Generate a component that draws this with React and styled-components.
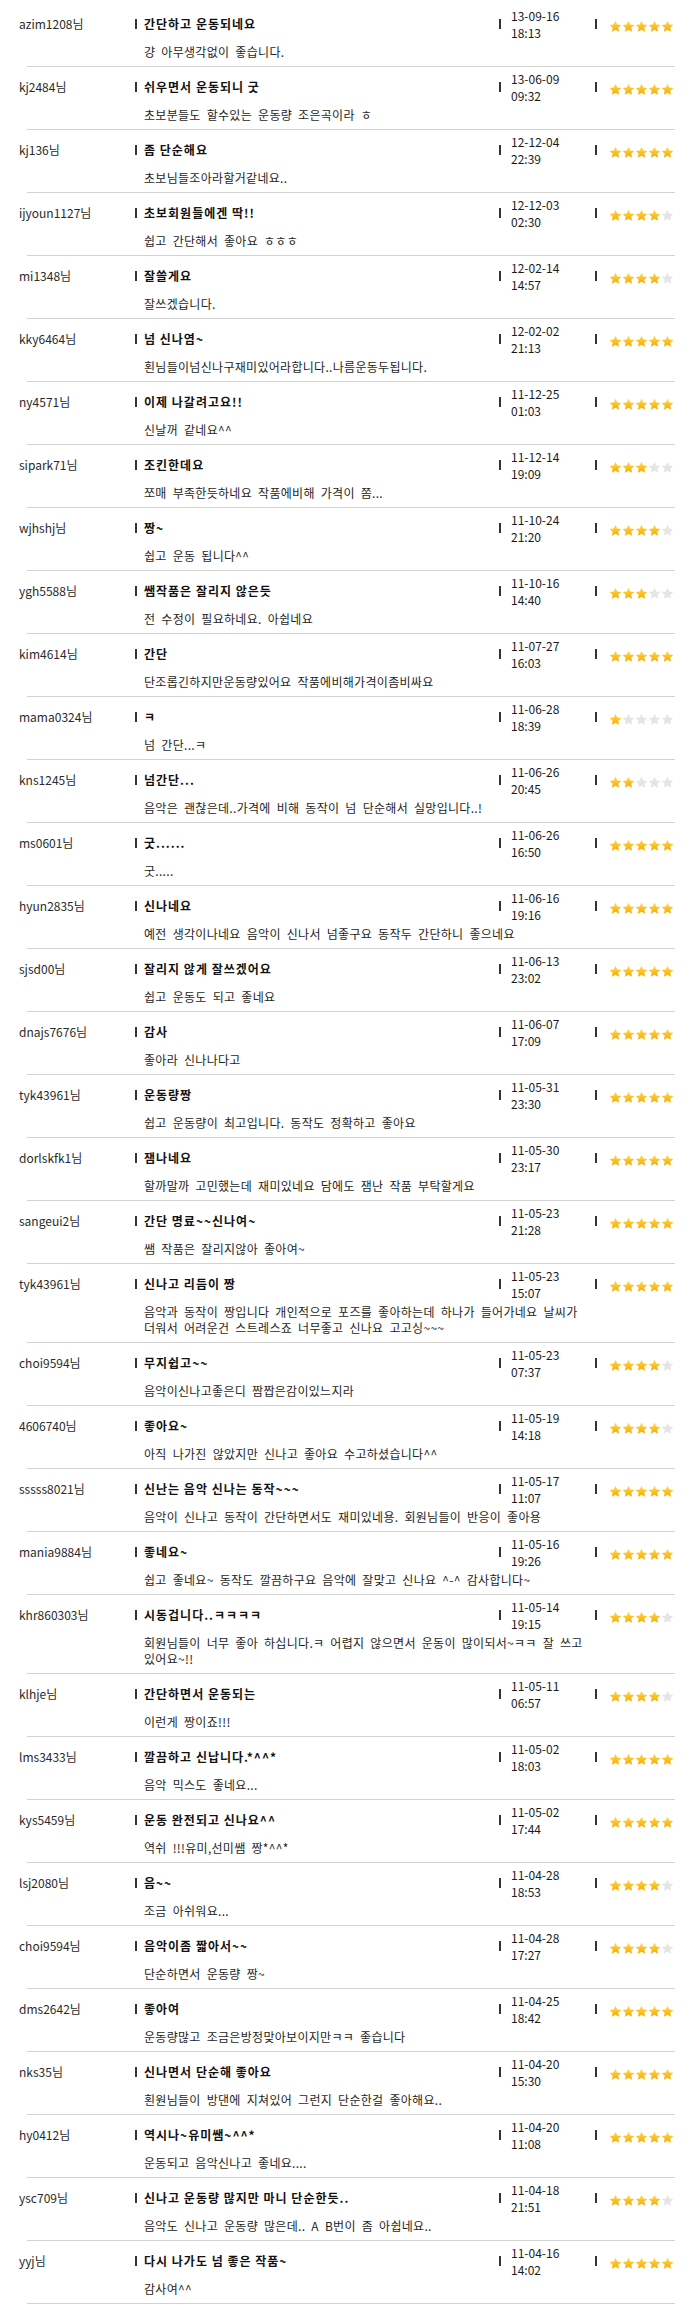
import React from "react";
import styled, { createGlobalStyle } from "styled-components";

const reviews = [
  ["azim1208님", "간단하고 운동되네요", "걍 아무생각없이 좋습니다.", "13-09-16", "18:13", 5],
  ["kj2484님", "쉬우면서 운동되니 굿", "초보분들도 할수있는 운동량 조은곡이라 ㅎ", "13-06-09", "09:32", 5],
  ["kj136님", "좀 단순해요", "초보님들조아라할거같네요..", "12-12-04", "22:39", 5],
  ["ijyoun1127님", "초보회원들에겐 딱!!", "쉽고 간단해서 좋아요 ㅎㅎㅎ", "12-12-03", "02:30", 4],
  ["mi1348님", "잘쓸게요", "잘쓰겠습니다.", "12-02-14", "14:57", 4],
  ["kky6464님", "넘 신나염~", "횐님들이넘신나구재미있어라합니다..나름운동두됩니다.", "12-02-02", "21:13", 5],
  ["ny4571님", "이제 나갈려고요!!", "신날꺼 같네요^^", "11-12-25", "01:03", 5],
  ["sipark71님", "조킨한데요", "쪼매 부족한듯하네요 작품에비해 가격이 쫌...", "11-12-14", "19:09", 3],
  ["wjhshj님", "짱~", "쉽고 운동 됩니다^^", "11-10-24", "21:20", 4],
  ["ygh5588님", "쌤작품은 잘리지 않은듯", "전 수정이 필요하네요. 아쉽네요", "11-10-16", "14:40", 3],
  ["kim4614님", "간단", "단조롭긴하지만운동량있어요 작품에비해가격이좀비싸요", "11-07-27", "16:03", 5],
  ["mama0324님", "ㅋ", "넘 간단...ㅋ", "11-06-28", "18:39", 1],
  ["kns1245님", "넘간단...", "음악은 괜찮은데..가격에 비해 동작이 넘 단순해서 실망입니다..!", "11-06-26", "20:45", 2],
  ["ms0601님", "굿......", "굿.....", "11-06-26", "16:50", 5],
  ["hyun2835님", "신나네요", "예전 생각이나네요 음악이 신나서 넘좋구요 동작두 간단하니 좋으네요", "11-06-16", "19:16", 5],
  ["sjsd00님", "잘리지 않게 잘쓰겠어요", "쉽고 운동도 되고 좋네요", "11-06-13", "23:02", 5],
  ["dnajs7676님", "감사", "좋아라 신나나다고", "11-06-07", "17:09", 5],
  ["tyk43961님", "운동량짱", "쉽고 운동량이 최고입니다. 동작도 정확하고 좋아요", "11-05-31", "23:30", 5],
  ["dorlskfk1님", "잼나네요", "할까말까 고민했는데 재미있네요 담에도 잼난 작품 부탁할게요", "11-05-30", "23:17", 5],
  ["sangeui2님", "간단 명료~~신나여~", "쌤 작품은 잘리지않아 좋아여~", "11-05-23", "21:28", 5],
  ["tyk43961님", "신나고 리듬이 짱", "음악과 동작이 짱입니다 개인적으로 포즈를 좋아하는데 하나가 들어가네요 날씨가 더워서 어려운건 스트레스죠 너무좋고 신나요 고고싱~~~", "11-05-23", "15:07", 5],
  ["choi9594님", "무지쉽고~~", "음악이신나고좋은디 짬짭은감이있느지라", "11-05-23", "07:37", 4],
  ["4606740님", "좋아요~", "아직 나가진 않았지만 신나고 좋아요 수고하셨습니다^^", "11-05-19", "14:18", 4],
  ["sssss8021님", "신난는 음악 신나는 동작~~~", "음악이 신나고 동작이 간단하면서도 재미있네용. 회원님들이 반응이 좋아용", "11-05-17", "11:07", 5],
  ["mania9884님", "좋네요~", "쉽고 좋네요~ 동작도 깔끔하구요 음악에 잘맞고 신나요 ^-^ 감사합니다~", "11-05-16", "19:26", 5],
  ["khr860303님", "시동겁니다..ㅋㅋㅋㅋ", "회원님들이 너무 좋아 하십니다.ㅋ 어렵지 않으면서 운동이 많이되서~ㅋㅋ 잘 쓰고 있어요~!!", "11-05-14", "19:15", 4],
  ["klhje님", "간단하면서 운동되는", "이런게 짱이죠!!!", "11-05-11", "06:57", 4],
  ["lms3433님", "깔끔하고 신납니다.*^^*", "음악 믹스도 좋네요...", "11-05-02", "18:03", 5],
  ["kys5459님", "운동 완전되고 신나요^^", "역쉬 !!!유미,선미쌤 짱*^^*", "11-05-02", "17:44", 5],
  ["lsj2080님", "음~~", "조금 아쉬워요...", "11-04-28", "18:53", 4],
  ["choi9594님", "음악이좀 짧아서~~", "단순하면서 운동량 짱~", "11-04-28", "17:27", 4],
  ["dms2642님", "좋아여", "운동량많고 조금은방정맞아보이지만ㅋㅋ 좋습니다", "11-04-25", "18:42", 5],
  ["nks35님", "신나면서 단순해 좋아요", "횐원님들이 방댄에 지쳐있어 그런지 단순한걸 좋아해요..", "11-04-20", "15:30", 5],
  ["hy0412님", "역시나~유미쌤~^^*", "운동되고 음악신나고 좋네요....", "11-04-20", "11:08", 5],
  ["ysc709님", "신나고 운동량 많지만 마니 단순한듯..", "음악도 신나고 운동량 많은데.. A B번이 좀 아쉽네요..", "11-04-18", "21:51", 4],
  ["yyj님", "다시 나가도 넘 좋은 작품~", "감사여^^", "11-04-16", "14:02", 5]
];

function Star({ on }) {
  return (
    <StarIcon viewBox="0 0 24 24">
      <defs>
        <linearGradient id="gold" x1="0" y1="0" x2="0" y2="1">
          <stop offset="0%" stopColor="#ffdc4a" />
          <stop offset="100%" stopColor="#f6a800" />
        </linearGradient>
      </defs>
      <polygon
        points="12,1.2 15.2,8.2 22.8,9 17.1,14.2 18.7,21.8 12,17.9 5.3,21.8 6.9,14.2 1.2,9 8.8,8.2"
        fill={on ? "url(#gold)" : "#e5e5e5"}
      />
    </StarIcon>
  );
}

function Review({ item }) {
  const [name, title, body, date, time, score] = item;
  return (
    <>
      <Row>
        <Head>
          <Name>{name}</Name>
          <Cell gap={7}>
            <Title>{title}</Title>
          </Cell>
          <Cell gap={10}>
            <When>
              <div>{date}</div>
              <div>{time}</div>
            </When>
          </Cell>
          <Cell gap={12}>
            <Stars>
              {[1, 2, 3, 4, 5].map(n => (
                <Star key={n} on={n <= score} />
              ))}
            </Stars>
          </Cell>
        </Head>
        <Body>{body}</Body>
      </Row>
      <Rule />
    </>
  );
}

function App() {
  return (
    <>
      <Global />
      <List>
        {reviews.map((r, i) => (
          <Review key={i} item={r} />
        ))}
      </List>
    </>
  );
}

const Global = createGlobalStyle`
  body {
    margin: 0;
    background: #fff;
    font-family: "Noto Sans CJK KR", "Noto Sans", sans-serif;
    font-size: 12px;
    color: #222;
  }
`;

const List = styled.div`
  width: 693px;
  padding-top: 4px;
`;

const Row = styled.div`
  padding: 0 0 6px 19px;
`;

const Head = styled.div`
  display: grid;
  grid-template-columns: 116px 364px 96px 80px;
  height: 40px;
  align-items: center;
`;

const Name = styled.div`
  color: #2a2a2a;
  line-height: 16px;
  white-space: nowrap;
`;

const Cell = styled.div`
  display: flex;
  align-items: center;
  height: 100%;

  &::before {
    content: "";
    flex: none;
    width: 2px;
    height: 10px;
    background: #333;
    margin-right: ${p => p.gap}px;
    margin-top: -1px;
  }
`;

const Title = styled.div`
  font-weight: bold;
  color: #111;
  letter-spacing: 1px;
  line-height: 16px;
  white-space: nowrap;
`;

const When = styled.div`
  color: #1a1a1a;
  line-height: 17px;
`;

const Stars = styled.div`
  display: flex;
  margin-top: 5px;
`;

const StarIcon = styled.svg`
  width: 13px;
  height: 13px;
  display: block;
`;

const Body = styled.div`
  margin-left: 125px;
  width: 450px;
  line-height: 16px;
  letter-spacing: 0.3px;
  word-spacing: 3px;
  word-break: keep-all;
  color: #1e1e1e;
`;

const Rule = styled.div`
  margin-left: 27px;
  width: 648px;
  height: 1px;
  background: #d2d2d2;
`;

export default App;
